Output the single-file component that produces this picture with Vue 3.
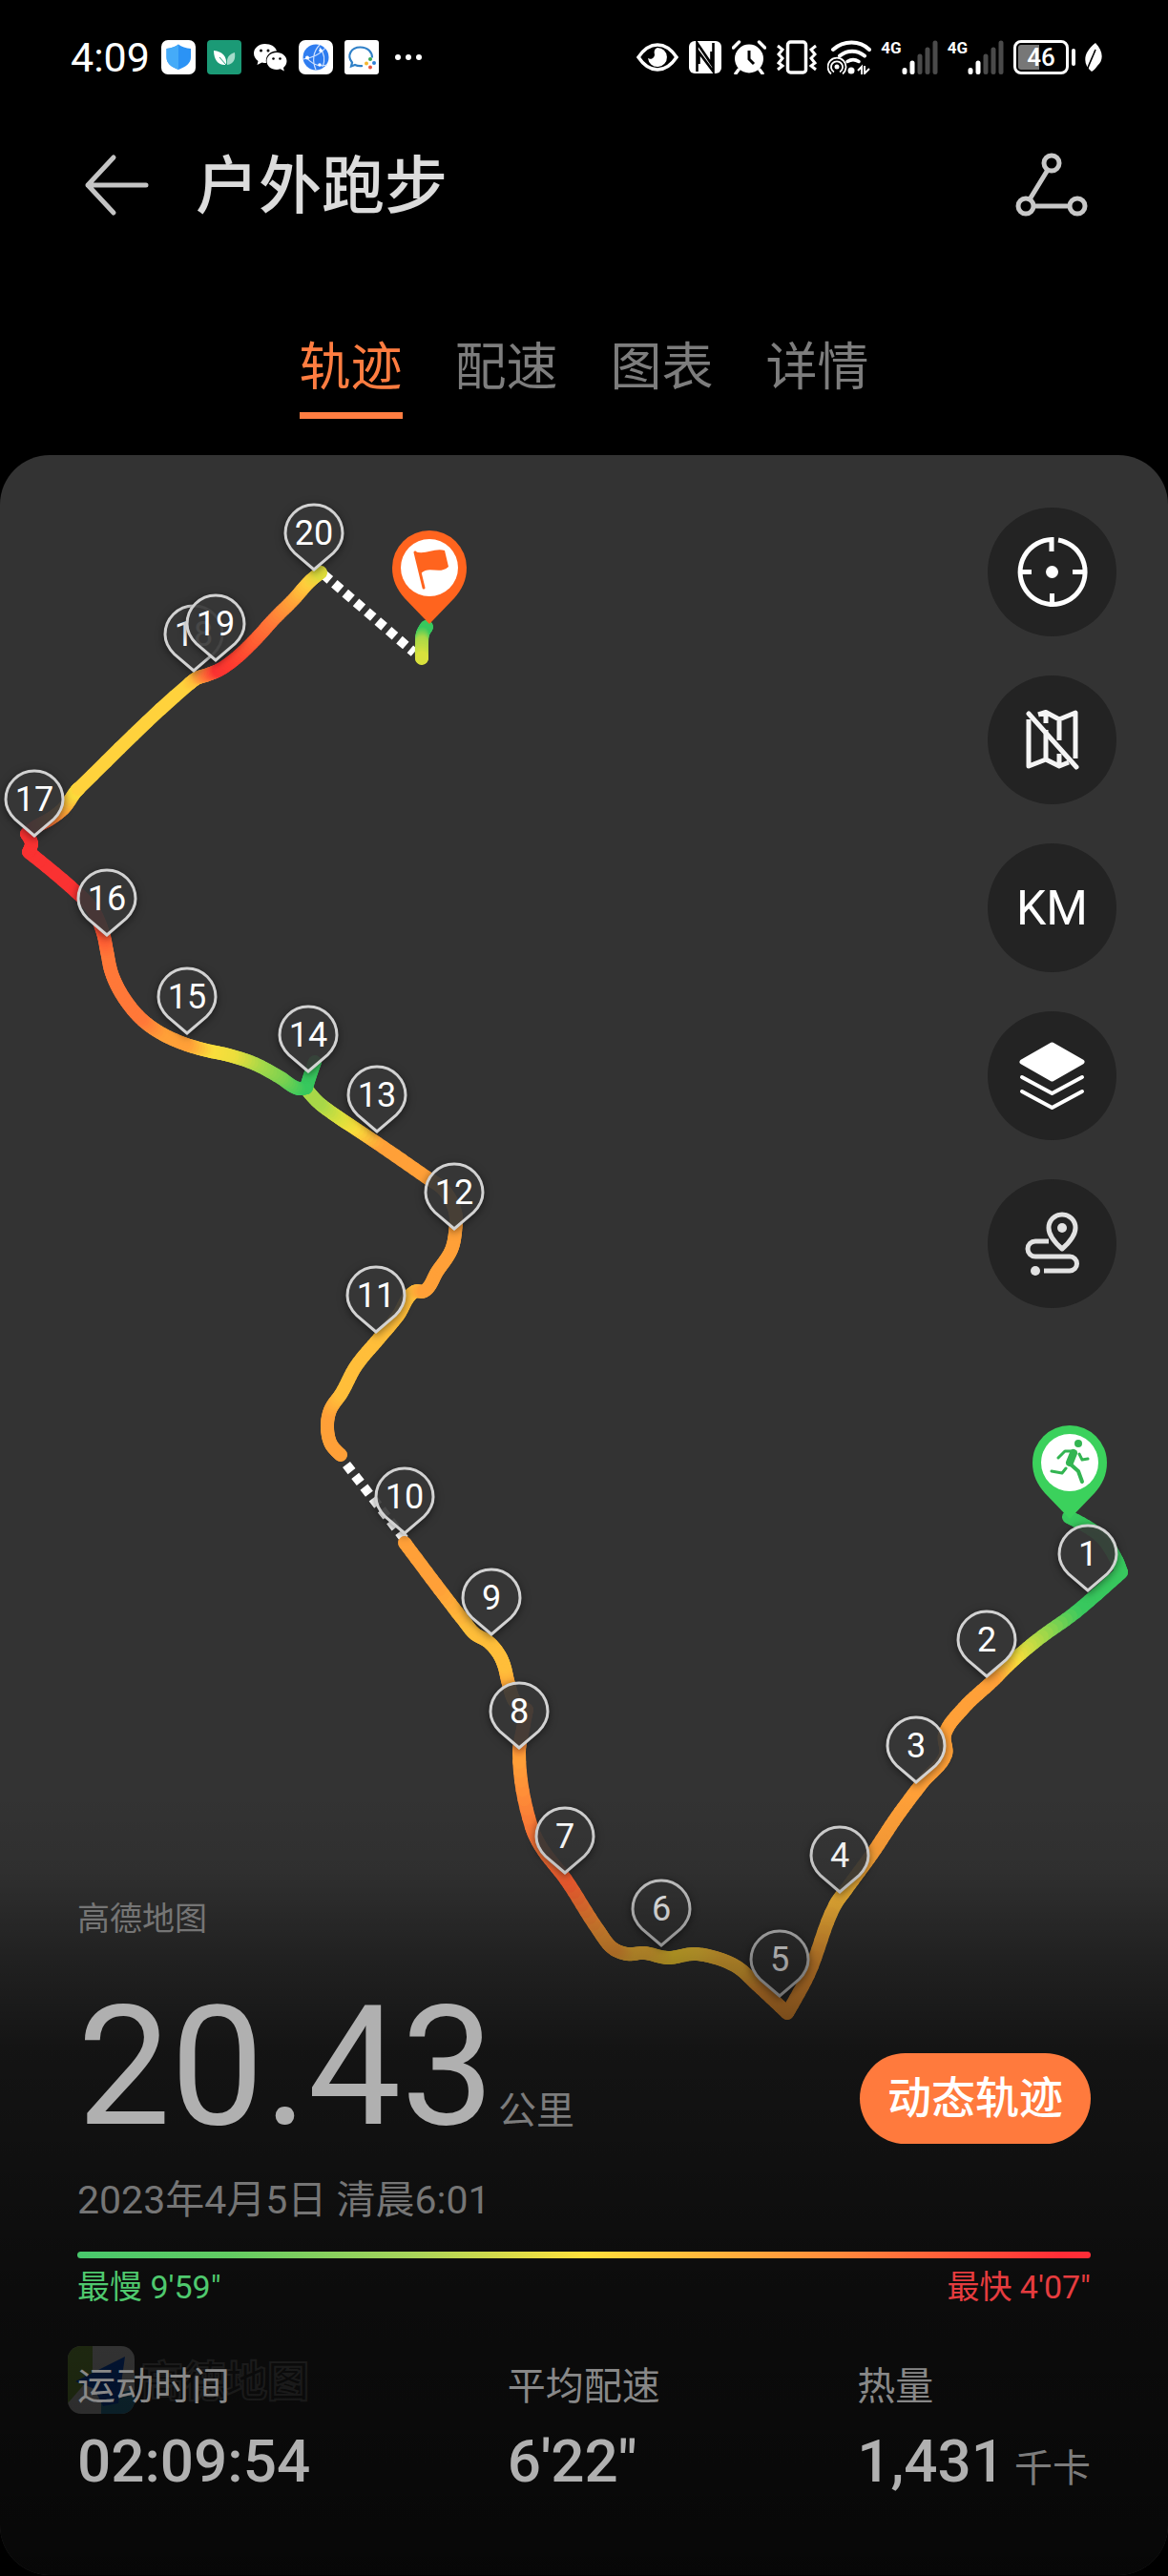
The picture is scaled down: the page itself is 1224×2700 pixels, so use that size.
<template>
  <div class="page">
    <div class="status">
      <div class="status__side">
        <span class="status__clock">4:09</span>
        <svg class="app-icon" viewBox="0 0 36 36">
          <rect width="36" height="36" rx="7" fill="#fff" />
          <path d="M18 4.500C21 7 26 8.500 31 9v9c0 6-5 10-13 13C10 28 5.500 24 5.500 18V9C10 8.500 15 7 18 4.500z" fill="#2b93f5" />
          <path d="M18 4.500C15 7 10 8.500 5.500 9v9c0 6 4.500 10 12.500 13z" fill="#45abf8" />
        </svg>
        <svg class="app-icon" viewBox="0 0 36 36">
          <rect width="36" height="36" rx="4" fill="#1b9a76" />
          <path d="M7 11c9 1 14 6 13 15C12 27 7 21 7 11z" fill="#fff" />
          <path d="M29 13c-6 2-9 5-8 13 7-1 9-6 8-13z" fill="#a5dccb" />
          <path d="M13 18l7 8" stroke="#1b9a76" stroke-width="1" />
        </svg>
        <svg class="app-icon" viewBox="0 0 36 36">
          <path d="M12.500 4C6 4 1 8.500 1 14c0 3.500 2 6 4.500 8L4.500 26l5-2.500c1.500.5 3 .5 4.500.5-1.500-8 5-13 11-12.500C24 7 19 4 12.500 4z" fill="#fff" />
          <path d="M25 13c6 0 10.500 4 10.500 9 0 3-1.500 5.200-3.500 7l.8 3.500-4-2.200c-1.200.4-2.500.6-3.800.6-6 0-10.500-4-10.500-9s4.500-8.900 10.500-8.900z" fill="#fff" />
          <g fill="#000">
            <circle cx="8.500" cy="11" r="1.500" />
            <circle cx="16" cy="11" r="1.500" />
            <circle cx="21.500" cy="19.500" r="1.300" />
            <circle cx="28.500" cy="19.500" r="1.300" />
          </g>
        </svg>
        <svg class="app-icon" viewBox="0 0 36 36">
          <rect width="36" height="36" rx="7" fill="#fff" />
          <circle cx="18" cy="18" r="13.500" fill="#2f7df0" />
          <g fill="none" stroke="#cfe2ff" stroke-width="1.200">
            <path d="M22 5C15 12 14 22 18 31M5 20c8-1 18-5 23-12M8 18c6 8 14 10 22 8M22 8c5 6 6 13 3 20" />
          </g>
          <g fill="#fff">
            <circle cx="9" cy="18.500" r="2" />
            <circle cx="23" cy="11" r="1.800" />
            <circle cx="22" cy="26" r="1.800" />
          </g>
        </svg>
        <svg class="app-icon" viewBox="0 0 36 36">
          <rect width="36" height="36" rx="3" fill="#fff" />
          <path d="M19 27c-3 .5-6 0-8-1l-4 1.500 1-4C2 16 7 7.500 16.500 7.500c8 0 12.500 5 12.500 11" fill="none" stroke="#2f80c8" stroke-width="2.200" />
          <circle cx="27" cy="20" r="2" fill="#36a852" />
          <circle cx="31" cy="24" r="2" fill="#2f80d8" />
          <circle cx="27" cy="28.500" r="2" fill="#e8553f" />
          <circle cx="23" cy="24.500" r="2" fill="#f5b72e" />
        </svg>
        <svg class="status__dots" viewBox="0 0 30 8" fill="#fff">
          <circle cx="4" cy="4" r="3" />
          <circle cx="15" cy="4" r="3" />
          <circle cx="26" cy="4" r="3" />
        </svg>
      </div>

      <div class="status__side status__side--right">
        <svg class="st st--eye" viewBox="0 0 44 36">
          <path d="M2 18C8 9 14 5 22 5s14 4 20 13c-6 9-12 13-20 13S8 27 2 18z" fill="none" stroke="#fff" stroke-width="3.500" />
          <path d="M22 8a10 10 0 1 1-10 11c3 2 7 0 7-4-1-3 0-6 3-7z" fill="#fff" />
        </svg>
        <svg class="st st--square" viewBox="0 0 36 36">
          <rect x="1" y="1" width="34" height="34" rx="6" fill="#fff" />
          <path d="M9.500 33V3l15 22V12M26.500 3v30L11.500 13v12" fill="none" stroke="#000" stroke-width="2.600" />
        </svg>
        <svg class="st st--square" viewBox="0 0 36 36">
          <circle cx="18" cy="19.500" r="15" fill="#fff" />
          <path d="M1.500 8l6-6M34.500 8l-6-6M7 31l-3 4M29 31l3 4" stroke="#fff" stroke-width="3.500" stroke-linecap="round" />
          <path d="M18 11v9l5 5" fill="none" stroke="#000" stroke-width="3" />
        </svg>
        <svg class="st st--eye" viewBox="0 0 44 36">
          <rect x="12.500" y="2" width="19" height="32" rx="3" fill="none" stroke="#fff" stroke-width="3.500" />
          <path d="M2 6l5 4-4 5 4 4-4 5 4 3-5 4M42 6l-5 4 4 5-4 4 4 5-4 3 5 4" fill="none" stroke="#fff" stroke-width="3" />
        </svg>
        <svg class="st st--wifi" viewBox="0 0 46 36" fill="none" stroke="#fff">
          <path d="M6 10c11-10 28-10 38 0M13 16.500c8-6.500 18-6.500 26 0" stroke-width="4" stroke-linecap="round" />
          <path d="M21 22.500c4-2.500 8-2.500 12 0" stroke-width="3.500" stroke-linecap="round" />
          <circle cx="10" cy="28" r="2.500" fill="#fff" stroke="none" />
          <path d="M7 33.500a6 6 0 1 1 6 0M4 35.500a9.500 9.500 0 1 1 12 0" stroke-width="1.800" />
          <circle cx="25" cy="32" r="3.500" fill="#fff" stroke="none" />
          <path d="M32 32l4-4v8M39 27v8l5-5" stroke-width="2" />
        </svg>
        <div v-for="n in 2" :key="n" class="signal">
          <span class="signal__type">4G</span>
          <svg class="signal__bars" viewBox="0 0 38 36" stroke-width="5" stroke-linecap="round">
            <path d="M3 31.500v2M11 24v9.500" stroke="#fff" />
            <path d="M19 17v16.500M27 10v23.500M35 3v30.500" stroke="#4a4a4a" />
          </svg>
        </div>
        <div class="battery">
          <span class="battery__body">46</span>
          <i class="battery__tip"></i>
          <svg class="battery__leaf" viewBox="0 0 20 30">
            <path d="M12 0c8 8 9 18 2 24-2 3-4 5-6 6C-2 22-1 10 12 0z" fill="#fff" />
            <path d="M12 7C9 15 6 20 3 29" fill="none" stroke="#000" stroke-width="1.600" />
          </svg>
        </div>
      </div>
    </div>

    <header class="header">
      <button class="icon-btn" type="button" aria-label="返回">
        <svg width="70" height="66" viewBox="0 0 70 66">
          <path d="M32 4L5 33l27 29M5 33h61" fill="none" stroke="#c4c4c4" stroke-width="5" stroke-linecap="round" stroke-linejoin="round" />
        </svg>
      </button>
      <h1 class="header__title">户外跑步</h1>
      <button class="icon-btn" type="button" aria-label="分享">
        <svg width="76" height="68" viewBox="0 0 76 68" fill="none" stroke="#c8c8c8" stroke-width="5">
          <circle cx="38" cy="11" r="8" />
          <circle cx="11" cy="56" r="8" />
          <circle cx="65" cy="56" r="8" />
          <path d="M34 18L15 49M19 56h38" />
        </svg>
      </button>
    </header>

    <nav class="tabs" role="tablist">
      <button
        v-for="tab in tabs"
        :key="tab"
        type="button"
        role="tab"
        class="tabs__item"
        :class="{ active: tab === activeTab }"
        :aria-selected="tab === activeTab"
        @click="activeTab = tab"
      >
        {{ tab }}
      </button>
    </nav>

    <main class="panel">
      <svg class="map" viewBox="0 477 1224 2222" preserveAspectRatio="xMidYMin slice">
        <!-- GPS 丢失的路段 -->
        <g stroke="#fff" stroke-width="10" stroke-dasharray="9 6">
          <path d="M339 602L434 684" />
          <path d="M363 1535L426 1616" />
        </g>
        <g stroke-width="14" stroke-linecap="round">
          <line v-for="(s, i) in segments" :key="i" :x1="s.x1" :y1="s.y1" :x2="s.x2" :y2="s.y2" :stroke="s.color" />
        </g>

        <g class="pin" v-for="p in pins" :key="p.km" :transform="`translate(${p.x} ${p.y})`">
          <path d="M0 0L-20 -17C-26 -23 -30 -30 -30 -38A30 30 0 0 1 30 -38C30 -30 26 -23 20 -17Z" />
          <text x="0" y="-26">{{ p.km }}</text>
        </g>

        <g transform="translate(450 654)">
          <path :d="flagPin" fill="#ff641e" />
          <circle cx="0" cy="-59" r="30" fill="#fff" />
          <path d="M-15 -76C-5 -72 5 -80 16 -77L20 -60C10 -51 0 -62 -9 -53Z" fill="#ff641e" />
          <path d="M-15 -75L-6 -38" stroke="#ff641e" stroke-width="3" stroke-linecap="round" />
        </g>
        <g transform="translate(1121 1592)">
          <path :d="flagPin" fill="#3bd15c" />
          <circle cx="0" cy="-59" r="30" fill="#fff" />
          <circle cx="9" cy="-79" r="4" fill="#33b552" />
          <g fill="none" stroke="#33b552" stroke-linecap="round" stroke-linejoin="round">
            <path d="M4 -69L0 -59" stroke-width="8" />
            <path d="M3 -71L-5 -71L-12 -64M10 -68L13 -62L19 -63M-4 -53L-8 -48L-19 -50" stroke-width="3" />
            <path d="M0 -58L9 -50L13 -39" stroke-width="4" />
          </g>
        </g>

        <g class="watermark">
          <clipPath id="logoClip"><rect x="71" y="2459" width="70" height="71" rx="14" /></clipPath>
          <g clip-path="url(#logoClip)">
            <rect x="71" y="2459" width="70" height="71" fill="#e8e8e8" />
            <path d="M71 2459h26v30l-26 30z" fill="#8ab84a" />
            <path d="M106 2530v-20l35-5v25z" fill="#3aa0c8" />
            <path d="M131 2470L79 2496l20 8 9 18 16-3z" fill="#0c5ae0" />
          </g>
          <text x="148" y="2512">高德地图</text>
        </g>
      </svg>

      <div class="tools">
        <button class="tool" type="button" aria-label="定位">
          <svg viewBox="0 0 135 135" fill="none" stroke="#fff" stroke-width="5">
            <path d="M74 34A34 34 0 1 1 67 33.500V46M67.500 102V90M33.500 67.500H46M101.500 67.500H89" />
            <circle cx="67.500" cy="67.500" r="6.500" fill="#fff" stroke="none" />
          </svg>
        </button>
        <button class="tool" type="button" aria-label="隐藏地图">
          <svg viewBox="0 0 135 135" fill="none" stroke="#f4f4f4" stroke-width="5" stroke-linejoin="round">
            <path d="M43 40L93 96" stroke-linecap="round" />
            <path d="M43 46V95L61 88L75 95L85 91M61 57V88M53 41L61 38.500L75 46L92 39V87M61 38V50M75 46V68M75 82V95" />
          </svg>
        </button>
        <button class="tool tool--text" type="button">KM</button>
        <button class="tool" type="button" aria-label="图层">
          <svg viewBox="0 0 135 135" stroke="#fff" stroke-width="5" stroke-linecap="round" stroke-linejoin="round">
            <path d="M67.500 35L99 53L67.500 71L36 53Z" fill="#fff" />
            <path d="M36 69L67.500 86L99 69M36 84L67.500 101L99 84" fill="none" stroke-width="4" />
          </svg>
        </button>
        <button class="tool" type="button" aria-label="路线">
          <svg viewBox="0 0 135 135" fill="none" stroke="#e2e2e2" stroke-width="5">
            <path d="M78 73C70 66 64 59 64 51A14 14 0 0 1 92 51C92 59 86 66 78 73Z" stroke-linejoin="round" />
            <path d="M64 65H50a8 8 0 0 0 0 16H86a7 7 0 0 1 0 15H59" />
            <circle cx="78" cy="51" r="5" fill="#e2e2e2" stroke="none" />
            <circle cx="50" cy="96" r="5" fill="#e2e2e2" stroke="none" />
          </svg>
        </button>
      </div>

      <section class="summary">
        <p class="summary__source">高德地图</p>
        <div class="summary__hero">
          <div class="distance">20.43<span class="distance__unit">公里</span></div>
          <button class="replay" type="button">动态轨迹</button>
        </div>
        <p class="summary__date">2023年4月5日 清晨6:01</p>

        <div class="pace-bar"></div>
        <div class="pace-range">
          <span class="slow">最慢 9'59"</span>
          <span class="fast">最快 4'07"</span>
        </div>

        <dl class="stats">
          <div v-for="item in stats" :key="item.label">
            <dt>{{ item.label }}</dt>
            <dd>{{ item.value }}<small v-if="item.unit">{{ item.unit }}</small></dd>
          </div>
        </dl>
      </section>
    </main>
  </div>
</template>

<script setup>
import { ref } from 'vue'

const tabs = ['轨迹', '配速', '图表', '详情']
const activeTab = ref('轨迹')

const stats = [
  { label: '运动时间', value: '02:09:54' },
  { label: '平均配速', value: '6\'22"' },
  { label: '热量', value: '1,431', unit: '千卡' }
]

const flagPin = 'M0 0L-26 -27C-34 -36 -39 -46 -39 -59A39 39 0 0 1 39 -59C39 -46 34 -36 26 -27Z'

// 每公里标记，坐标为尖端位置
const pins = [
  [1, 1140, 1667], [2, 1034, 1757], [3, 960, 1868], [4, 880, 1983], [5, 817, 2092],
  [6, 693, 2039], [7, 592, 1963], [8, 544, 1832], [9, 515, 1713], [10, 424, 1607],
  [11, 394, 1396], [12, 476, 1288], [13, 395, 1186], [14, 323, 1123], [15, 196, 1083],
  [16, 112, 980], [17, 36, 876], [18, 203, 703], [19, 226, 692], [20, 329, 597]
].map(([km, x, y]) => ({ km, x, y }))

// 配速颜色：绿 -> 黄 -> 橙 -> 红
const G = [56, 200, 94]
const L = [168, 216, 72]
const Y = [250, 222, 60]
const A = [255, 190, 58]
const O = [255, 160, 56]
const D = [255, 120, 56]
const R = [250, 50, 50]

const tracks = [
  [[1120, 1590, G], [1153, 1610, G], [1170, 1635, G], [1175, 1648, G], [1127, 1690, G], [1087, 1719, L],
    [1060, 1742, Y], [1040, 1762, O], [1010, 1790, O], [990, 1818, O], [991, 1839, O], [967, 1868, O],
    [940, 1904, O], [914, 1943, O], [887, 1980, A], [875, 1997, A], [847, 2070, O], [825, 2110, O],
    [793, 2080, O], [773, 2062, A], [750, 2052, A], [727, 2048, [255, 205, 58]], [700, 2052, [255, 214, 50]],
    [675, 2047, A], [657, 2048, A], [642, 2042, O], [627, 2023, O], [593, 1970, [255, 95, 50]],
    [567, 1936, D], [557, 1915, D], [544, 1837, O], [548, 1812, D], [552, 1792, D], [540, 1784, O],
    [533, 1765, O], [528, 1745, A], [523, 1734, A], [512, 1721, A], [497, 1712, A], [487, 1700, A],
    [457, 1661, O], [424, 1617, O]],
  [[357, 1525, O], [347, 1514, O], [343, 1496, O], [346, 1478, O], [358, 1460, A], [373, 1432, A],
    [397, 1403, A], [417, 1379, A], [434, 1354, A], [445, 1353, O], [458, 1333, O], [473, 1310, O],
    [477, 1292, O], [477, 1270, O], [465, 1247, O], [447, 1234, O], [395, 1198, O], [368, 1180, Y],
    [353, 1170, [220, 224, 60]], [333, 1155, L], [323, 1144, L]],
  [[330, 1113, G], [325, 1127, G], [321, 1140, G], [313, 1141, G], [293, 1129, [120, 208, 80]],
    [267, 1115, L], [240, 1106, [236, 222, 60]], [217, 1101, Y], [193, 1094, O], [167, 1082, O],
    [147, 1067, D], [128, 1043, D], [117, 1020, D], [112, 997, D], [108, 978, [255, 90, 51]],
    [97, 953, R], [80, 935, R], [30, 893, R], [33, 884, R], [28, 874, R], [37, 867, R], [53, 858, D],
    [67, 847, O], [80, 829, Y], [83, 826, [255, 210, 60]], [198, 717, [255, 210, 60]],
    [206, 711, A], [218, 707, D], [230, 702, R], [247, 690, [255, 60, 48]], [267, 671, [255, 90, 50]],
    [287, 649, D], [308, 628, O], [325, 609, [255, 205, 60]], [336, 600, [220, 222, 60]]],
  [[447, 657, G], [443, 664, G], [442, 674, L], [442, 690, [220, 226, 60]]]
]

const STEPS = 8
const mix = (a, b, t) => a.map((v, i) => Math.round(v + (b[i] - v) * t))

// 节点处的切线方向，急转弯处保持尖角
function tangent(track, i) {
  const prev = track[i - 1]
  const cur = track[i]
  const next = track[i + 1]
  if (!prev || !next) return [0, 0]
  const inLen = Math.hypot(cur[0] - prev[0], cur[1] - prev[1])
  const outLen = Math.hypot(next[0] - cur[0], next[1] - cur[1])
  const ax = (cur[0] - prev[0]) / inLen
  const ay = (cur[1] - prev[1]) / inLen
  const bx = (next[0] - cur[0]) / outLen
  const by = (next[1] - cur[1]) / outLen
  if (ax * bx + ay * by < 0.5) return [0, 0]
  const len = Math.hypot(ax + bx, ay + by)
  return [(ax + bx) / len, (ay + by) / len]
}

function curvePoint(p, q, m, n, t) {
  const len = Math.hypot(q[0] - p[0], q[1] - p[1])
  const t2 = t * t
  const t3 = t2 * t
  return [0, 1].map(k =>
    (2 * t3 - 3 * t2 + 1) * p[k] + (t3 - 2 * t2 + t) * m[k] * len +
    (3 * t2 - 2 * t3) * q[k] + (t3 - t2) * n[k] * len
  )
}

// 拆成小段，让颜色沿路线平滑过渡
const segments = tracks.flatMap(track =>
  track.slice(1).flatMap((q, i) => {
    const p = track[i]
    const m = tangent(track, i)
    const n = tangent(track, i + 1)
    return Array.from({ length: STEPS }, (_, k) => {
      const [x1, y1] = curvePoint(p, q, m, n, k / STEPS)
      const [x2, y2] = curvePoint(p, q, m, n, (k + 1) / STEPS)
      return { x1, y1, x2, y2, color: `rgb(${mix(p[2], q[2], (k + 0.5) / STEPS).join(',')})` }
    })
  })
)
</script>

<style>
body {
  margin: 0;
  background: #000;
}
</style>

<style scoped>
.page {
  display: flex;
  flex-direction: column;
  min-height: 100vh;
  box-sizing: border-box;
  padding-bottom: 1px;
  background: #000;
  color: #b0b0b0;
  font-family: Roboto, "Noto Sans CJK SC", sans-serif;
}
button {
  border: 0;
  padding: 0;
  background: none;
  font-family: inherit;
  cursor: pointer;
}
svg {
  display: block;
}
p, dl, dd {
  margin: 0;
}

/* 状态栏 */
.status {
  display: flex;
  justify-content: space-between;
  height: 40px;
  padding: 40px 68px 0 74px;
  color: #fff;
}
.status__side {
  display: flex;
  align-items: center;
  gap: 12px;
}
.status__clock {
  font-size: 43px;
  line-height: 40px;
}
.app-icon {
  width: 36px;
  height: 36px;
}
.status__dots {
  width: 30px;
  margin-left: 4px;
}
.st {
  height: 36px;
}
.st--eye {
  width: 44px;
}
.st--square {
  width: 36px;
}
.st--wifi {
  width: 46px;
}
.status__side--right {
  gap: 10px;
}
.signal {
  display: flex;
  height: 36px;
}
.signal__type {
  font-size: 17px;
  font-weight: 700;
  line-height: 16px;
}
.signal__bars {
  width: 38px;
  height: 36px;
}
.battery {
  display: flex;
  align-items: center;
  gap: 3px;
}
.battery__body {
  box-sizing: border-box;
  width: 58px;
  height: 36px;
  border: 3px solid #fff;
  border-radius: 8px;
  padding: 2px;
  background: linear-gradient(90deg, #777 46%, transparent 46%) content-box;
  font-size: 26px;
  font-weight: 500;
  line-height: 27px;
  text-align: center;
}
.battery__tip {
  width: 4px;
  height: 18px;
  border-radius: 2px;
  background: #fff;
}
.battery__leaf {
  width: 20px;
  height: 30px;
  margin-left: 6px;
}

/* 标题 */
.header {
  display: flex;
  align-items: center;
  height: 80px;
  margin-top: 74px;
  padding: 0 84px 0 87px;
}
.header__title {
  flex: 1;
  margin: 0 0 0 48px;
  padding-top: 4px;
  color: #dcdcdc;
  font-size: 66px;
  font-weight: 500;
  line-height: 80px;
}

.tabs {
  display: flex;
  justify-content: center;
  gap: 55px;
  margin: 120px 0 38px;
}
.tabs__item {
  padding-bottom: 14px;
  border-bottom: 7px solid transparent;
  color: #7d7d7d;
  font-size: 54px;
  line-height: 64px;
}
.tabs__item.active {
  color: #ff7d41;
  background: linear-gradient(#ff7d41, #ff7d41) 0 100% / 100% 7px no-repeat border-box;
}

/* 地图面板 */
.panel {
  position: relative;
  display: flex;
  flex: 1;
  flex-direction: column;
  overflow: hidden;
  border-radius: 52px;
  background: #333;
}
.map {
  position: absolute;
  inset: 0;
  width: 100%;
  height: 100%;
}
.pin path {
  fill: rgba(58, 58, 58, .86);
  stroke: #d2d2d2;
  stroke-width: 3;
  filter: drop-shadow(0 2px 4px rgba(0, 0, 0, .5));
}
.pin text {
  fill: #fff;
  font-size: 36px;
  text-anchor: middle;
}
.watermark text {
  fill: #333;
  stroke: #808080;
  stroke-width: 2;
  font-family: "Noto Sans CJK SC", sans-serif;
  font-size: 44px;
  font-weight: 700;
}

.tools {
  position: relative;
  display: flex;
  flex-direction: column;
  align-items: flex-end;
  gap: 41px;
  padding: 55px 54px 0;
}
.tool {
  width: 135px;
  height: 135px;
  border-radius: 50%;
  background: #232323;
}
.tool--text {
  color: #fff;
  font-size: 50px;
}

.summary {
  position: relative;
  margin-top: auto;
  padding: 112px 81px 87px;
  background: linear-gradient(
    rgba(0, 0, 0, 0),
    rgba(0, 0, 0, .08) 10%,
    rgba(0, 0, 0, .2) 15%,
    rgba(0, 0, 0, .38) 22%,
    rgba(0, 0, 0, .5) 28%,
    rgba(0, 0, 0, .62) 33%,
    rgba(0, 0, 0, .68) 45%,
    rgba(0, 0, 0, .77) 64%,
    rgba(0, 0, 0, .86)
  );
}
.summary__source {
  color: #757575;
  font-size: 34px;
  line-height: 40px;
}
.summary__hero {
  display: flex;
  align-items: flex-end;
  justify-content: space-between;
  height: 150px;
  margin-top: 66px;
}
.distance {
  align-self: flex-start;
  font-size: 174px;
  line-height: 140px;
}
.distance__unit {
  margin-left: 4px;
  color: #7c7c7c;
  font-size: 40px;
  line-height: 0;
}
.replay {
  padding: 0 29px;
  border-radius: 48px;
  background: #ff7a3d;
  color: #fff;
  font-size: 46px;
  font-weight: 500;
  line-height: 95px;
}
.summary__date {
  margin-top: 35px;
  color: #757575;
  font-size: 41px;
  line-height: 48px;
}
.pace-bar {
  height: 7px;
  margin-top: 30px;
  border-radius: 4px;
  background: linear-gradient(90deg, #48c76c, #62cb62 15%, #a8d45a 33%, #ffe03c 50%, #ff8a3c 75%, #ff2d37 97%);
}
.pace-range {
  display: flex;
  justify-content: space-between;
  margin-top: 10px;
  font-size: 34px;
  line-height: 40px;
}
.slow {
  color: #4fc96e;
}
.fast {
  color: #e63c3f;
}
.stats {
  display: flex;
  justify-content: space-between;
  margin-top: 61px;
}
.stats dt {
  color: #888;
  font-size: 40px;
  line-height: 48px;
}
.stats dd {
  margin-top: 22px;
  font-size: 62px;
  font-weight: 500;
  line-height: 64px;
}
.stats small {
  margin-left: 10px;
  color: #7c7c7c;
  font-size: 40px;
  font-weight: 400;
  line-height: 0;
}
</style>
